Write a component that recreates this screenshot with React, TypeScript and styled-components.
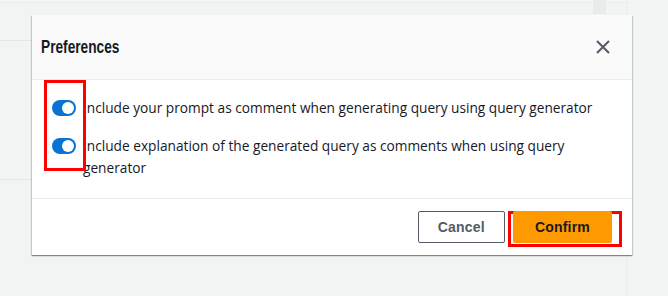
import React from "react";
import styled, { createGlobalStyle } from "styled-components";

const Global = createGlobalStyle`
  html, body { margin: 0; padding: 0; }
  body {
    background: #f2f3f3;
    font-family: "Open Sans", "Liberation Sans", sans-serif;
    color: #16191f;
  }
`;

const Page = styled.div`
  position: relative;
  width: 668px;
  height: 296px;
  overflow: hidden;
  display: flex;
  background: #f2f3f3;
`;

const MainArea = styled.div`
  flex: 1;
  display: flex;
  flex-direction: column;
  border-right: 1px solid #eaeded;
`;

const TopStrip = styled.div`
  height: 2px;
  background: #f5f6f6;
  border-bottom: 1px solid #ebeded;
  display: flex;
  justify-content: flex-end;
  padding-right: 21px;
`;

const ScrollStub = styled.div`
  width: 13px;
  height: 14px;
  background: #e9ebeb;
`;

const BgRow = styled.div<{ $h: number }>`
  height: ${(p) => p.$h}px;
  border-bottom: 1px solid #e6e8e8;
`;

const SidePanel = styled.div`
  width: 40px;
  background: #f3f4f4;
`;

const Modal = styled.div`
  position: absolute;
  left: 32px;
  top: 15px;
  width: 600px;
  background: #fff;
  box-shadow: 0 1px 1px 0 rgba(0, 28, 36, 0.3), 1px 1px 1px 0 rgba(0, 28, 36, 0.15),
    -1px 1px 1px 0 rgba(0, 28, 36, 0.15);
  display: flex;
  flex-direction: column;
`;

const Header = styled.div`
  height: 65px;
  box-sizing: border-box;
  padding: 0 21px 0 9px;
  display: flex;
  align-items: center;
  justify-content: space-between;
  background: #fafafa;
  border-bottom: 1px solid #eaeded;
`;

const Title = styled.h2`
  margin: 0;
  font-family: "Liberation Sans", Arial, sans-serif;
  font-weight: 700;
  font-size: 18.5px;
  line-height: 24px;
  color: #16191f;
  transform: scaleX(0.74);
  transform-origin: left center;
`;

const CloseButton = styled.button`
  border: none;
  background: transparent;
  padding: 0;
  width: 16px;
  height: 16px;
  display: flex;
  cursor: pointer;
`;

const Body = styled.div`
  padding: 17px 20px 19px 20px;
  display: flex;
  flex-direction: column;
  gap: 16px;
  border-bottom: 1px solid #eaeded;
`;

const OptionRow = styled.label`
  display: flex;
  align-items: flex-start;
  gap: 7px;
  font-size: 13.7px;
  line-height: 22px;
  color: #16191f;
`;

const ToggleWrap = styled.span`
  flex: none;
  height: 22px;
  display: flex;
  align-items: center;
`;

const Toggle = styled.span<{ $on: boolean }>`
  position: relative;
  width: 24px;
  height: 16px;
  border-radius: 8px;
  background: ${(p) => (p.$on ? "#0972d3" : "#879596")};
  &::after {
    content: "";
    position: absolute;
    top: 2px;
    left: ${(p) => (p.$on ? "10px" : "2px")};
    width: 12px;
    height: 12px;
    border-radius: 50%;
    background: #fff;
  }
`;

const Footer = styled.div`
  padding: 12px 20px;
  display: flex;
  justify-content: flex-end;
  gap: 8px;
`;

const Button = styled.button<{ $primary?: boolean }>`
  position: relative;
  z-index: 1;
  height: 32px;
  box-sizing: border-box;
  border-radius: 2px;
  font-family: "Liberation Sans", Arial, sans-serif;
  font-weight: 700;
  font-size: 14px;
  letter-spacing: 0.2px;
  cursor: pointer;
  padding: ${(p) => (p.$primary ? "0 22px" : "0 19px")};
  border: ${(p) => (p.$primary ? "none" : "1px solid #545b64")};
  background: ${(p) => (p.$primary ? "#ff9900" : "#fff")};
  color: ${(p) => (p.$primary ? "#16191f" : "#545b64")};
`;

const Highlight = styled.div<{ $l: number; $t: number; $w: number; $h: number }>`
  position: absolute;
  left: ${(p) => p.$l}px;
  top: ${(p) => p.$t}px;
  width: ${(p) => p.$w}px;
  height: ${(p) => p.$h}px;
  box-sizing: border-box;
  border: 3px solid #f00;
  pointer-events: none;
`;

const options = [
  "Include your prompt as comment when generating query using query generator",
  "Include explanation of the generated query as comments when using query generator",
];

export default function App() {
  return (
    <>
      <Global />
      <Page>
        <MainArea>
          <TopStrip>
            <ScrollStub />
          </TopStrip>
          <BgRow $h={37} />
          <BgRow $h={138} />
        </MainArea>
        <SidePanel />
        <Modal>
          <Header>
            <Title>Preferences</Title>
            <CloseButton aria-label="Close">
              <svg width="16" height="16" viewBox="0 0 16 16">
                <path d="M2 2L14 14M14 2L2 14" stroke="#545b64" strokeWidth="2" fill="none" />
              </svg>
            </CloseButton>
          </Header>
          <Body>
            {options.map((o) => (
              <OptionRow key={o}>
                <ToggleWrap>
                  <Toggle $on />
                </ToggleWrap>
                <span>{o}</span>
              </OptionRow>
            ))}
          </Body>
          <Footer>
            <Button>Cancel</Button>
            <Button $primary>Confirm</Button>
          </Footer>
          <Highlight $l={12} $t={65} $w={42} $h={91} />
          <Highlight $l={476} $t={196} $w={114} $h={36} />
        </Modal>
      </Page>
    </>
  );
}
